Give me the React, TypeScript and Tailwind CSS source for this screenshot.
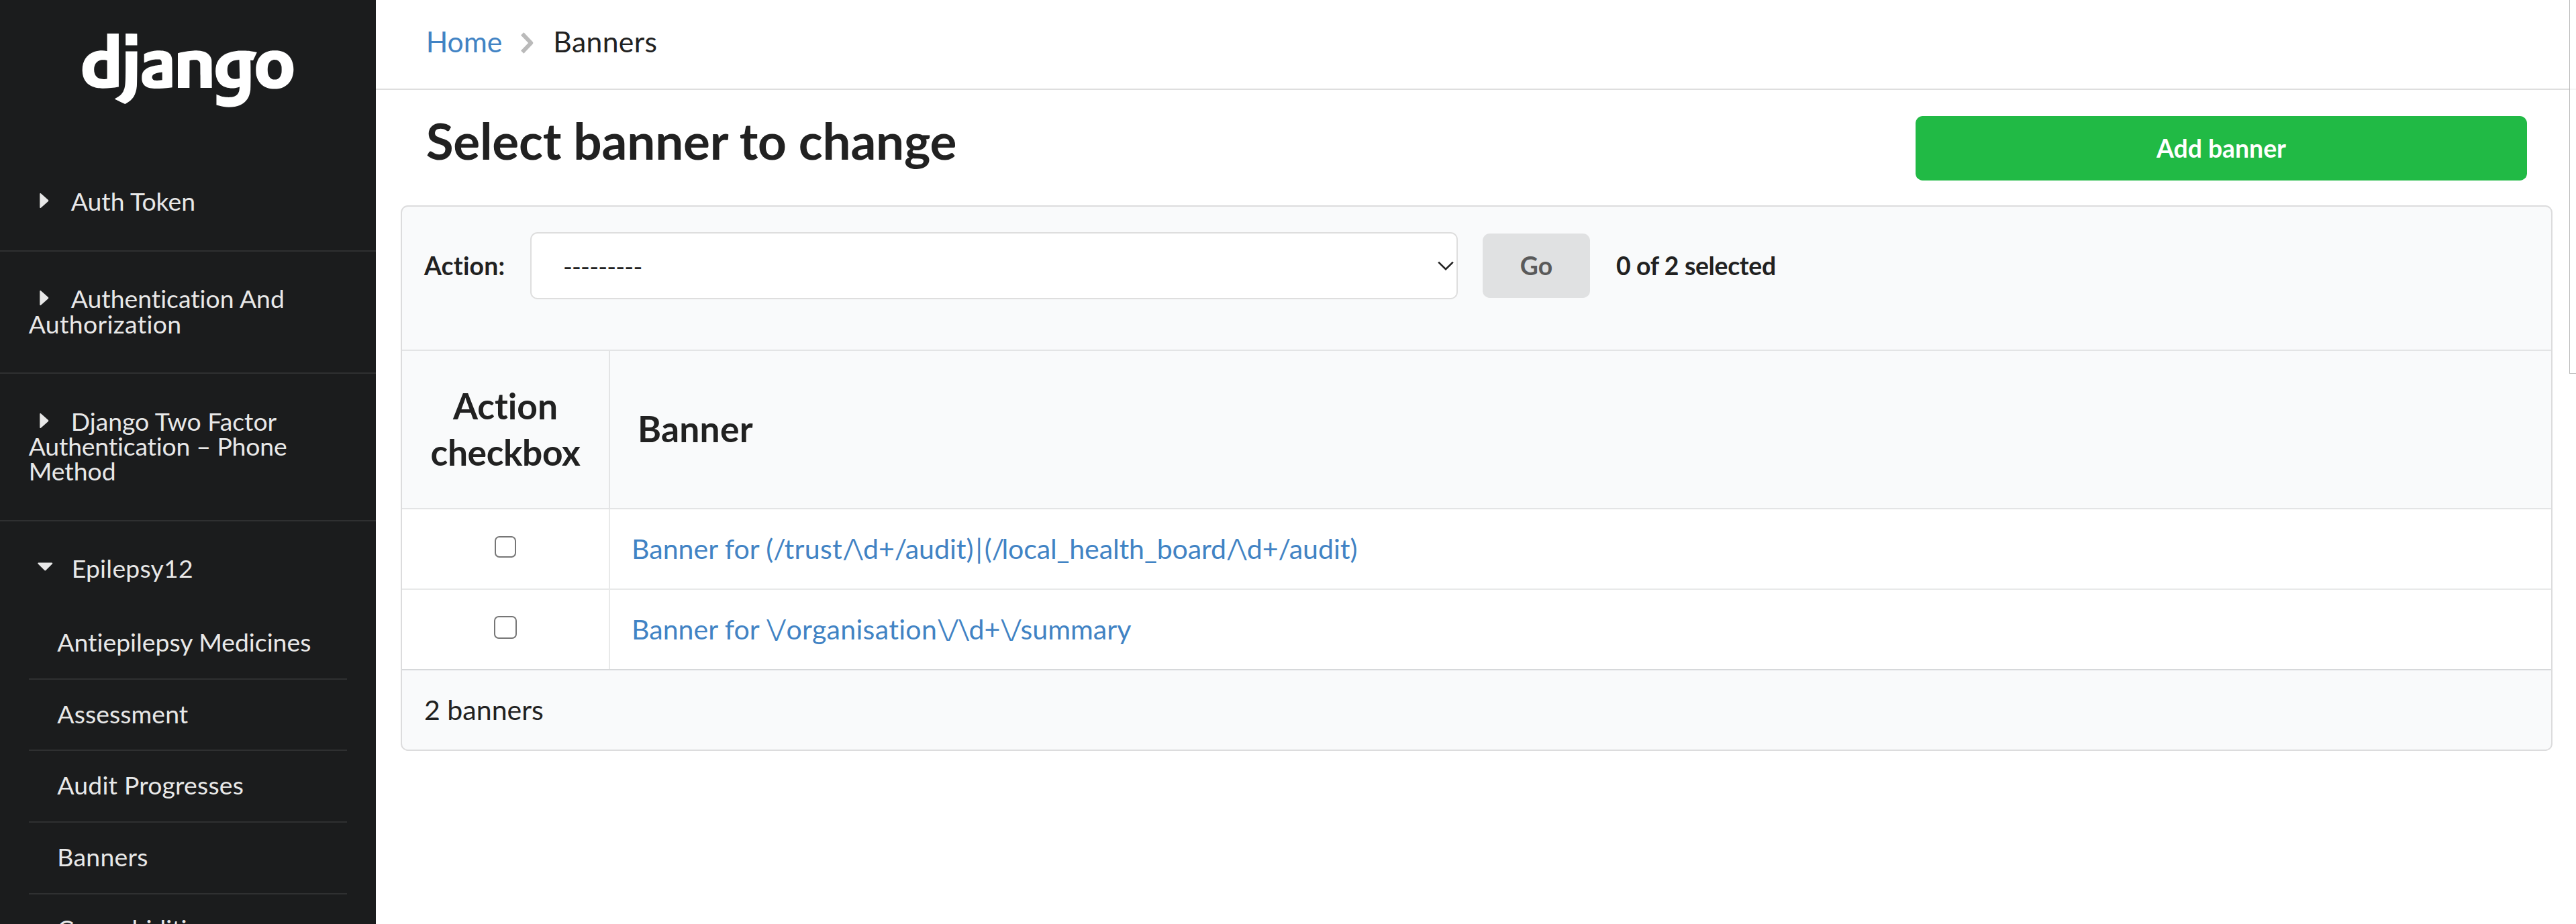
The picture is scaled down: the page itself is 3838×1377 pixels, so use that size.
import React from 'react';
import { DiDjango } from 'react-icons/di';

type Run = [text: string, tracking?: string];

const collapsedApps: Run[][] = [
  [['Auth Token']],
  [['Authentication And '], ['Authorization', 'tracking-[0.37px]']],
  [['Django Two Factor '], ['Authentication – Phone', 'tracking-[-0.17px]'], [' Method']],
];

const models: Run[] = [
  ['Antiepilepsy Medicines'],
  ['Assessment', 'tracking-[0.1px]'],
  ['Audit Progresses', 'tracking-[0.2px]'],
  ['Banners', 'tracking-[0.3px]'],
  ['Comorbidities'],
];

// Slashes and backslashes in the URL patterns are kerned tightly.
const banners: { id: number; runs: Run[]; box: string }[] = [
  {
    id: 1,
    runs: [
      ['Banner for ('],
      ['/', 'tracking-[-2.3px]'],
      ['trust', 'tracking-[0.3px]'],
      ['/', 'tracking-[-5px]'],
      ['\\', 'tracking-[-1.3px]'],
      ['d+'],
      ['/', 'tracking-[-2.7px]'],
      ['audit'],
      [')|', 'tracking-[3px]'],
      ['('],
      ['/', 'tracking-[-3.8px]'],
      ['local_health_board', 'tracking-[-0.12px]'],
      ['/', 'tracking-[-5px]'],
      ['\\', 'tracking-[-1.3px]'],
      ['d+'],
      ['/', 'tracking-[-2.4px]'],
      ['audit)'],
    ],
    box: 'mb-[6px] size-8',
  },
  {
    id: 2,
    runs: [
      ['Banner for'],
      [' ', 'tracking-[-1.5px]'],
      ['\\', 'tracking-[-5.5px]'],
      ['/', 'tracking-[-0.8px]'],
      ['organisation', 'tracking-[0.3px]'],
      ['\\', 'tracking-[-4px]'],
      ['/', 'tracking-[-2.5px]'],
      ['\\', 'tracking-[-1.7px]'],
      ['d'],
      ['+', 'tracking-[-0.5px]'],
      ['\\', 'tracking-[-4px]'],
      ['/', 'tracking-[-2.5px]'],
      ['summary'],
    ],
    box: 'mb-[6px] size-[34px]',
  },
];

function Runs({ runs }: { runs: Run[] }) {
  return (
    <>
      {runs.map(([text, tracking], i) =>
        tracking ? (
          <span key={i} className={tracking}>
            {text}
          </span>
        ) : (
          text
        ),
      )}
    </>
  );
}

function CaretRight() {
  return (
    <svg viewBox="0 0 63 22" className="inline-block h-[22px] w-[63px] align-[4px]" fill="currentColor">
      <path d="M16.3 1v20c0 .9 1 1.3 1.6.7l11-9.8c.5-.5.5-1.3 0-1.8L17.9.3c-.6-.6-1.6-.2-1.6.7z" />
    </svg>
  );
}

function CaretDown() {
  return (
    <svg viewBox="0 0 64 22" className="inline-block h-[22px] w-[64px] align-[4px]" fill="currentColor">
      <path d="M14.4 3.6h19.8c1 0 1.4 1.1.8 1.7l-9.8 9.7c-.5.5-1.3.5-1.8 0L13.6 5.3c-.6-.6-.2-1.7.8-1.7z" />
    </svg>
  );
}

function Sidebar() {
  return (
    <aside className="h-full w-[560px] shrink-0 overflow-hidden bg-[#1b1c1d] text-[37.33px] leading-[37.33px] text-[#e8e8e8]">
      <div className="flex h-[230px] items-start justify-center">
        <DiDjango className="-mt-[57px] size-[318px] shrink-0 text-white" />
      </div>
      {collapsedApps.map((runs) => (
        <div key={runs[0][0]} className="border-b-2 border-[#2f3031] px-[42.67px] pt-[51.3px] pb-[54.37px]">
          <CaretRight />
          <Runs runs={runs} />
        </div>
      ))}
      <div className="px-[42.67px] pt-[51.3px]">
        <div className="mb-[40.5px] tracking-[0.25px]">
          <CaretDown />
          Epilepsy12
        </div>
        {models.map((model) => (
          <div key={model[0]} className="border-b-2 border-[#2f3031] pt-8 pb-[35.33px] pl-[42.67px]">
            <Runs runs={[model]} />
          </div>
        ))}
      </div>
    </aside>
  );
}

function Breadcrumb() {
  return (
    <header className="flex h-[134px] items-start border-b-2 border-[#dedede] pt-[41px] pl-[74.67px] text-[42.67px] leading-[42.67px]">
      <a className="text-[#4183c4]">Home</a>
      <svg viewBox="0 0 22 32" className="mt-[7px] mr-[27px] ml-[27px] h-8 w-[22px]" fill="none" stroke="#bababa" strokeWidth="6">
        <path d="M3.2 2.4 16.2 16 3.2 29.6" strokeLinejoin="round" />
      </svg>
      <span className="tracking-[0.35px]">Banners</span>
    </header>
  );
}

function Toolbar() {
  return (
    <div className="flex h-[215px] items-start border-b-2 border-[#e3e4e5] pt-[38px] pl-[33px] text-[37.33px] leading-[37.33px] font-bold">
      <label className="mt-[31px] w-[158px] tracking-[0.2px]">Action:</label>
      <div className="flex h-[100px] w-[1382px] items-center justify-between rounded-[10.67px] border-2 border-[#dedede] bg-white pr-1 pl-[47px] font-normal">
        <span className="pt-[2px] tracking-[-0.82px]">---------</span>
        <svg viewBox="0 0 24 14" className="h-[14px] w-6" fill="none" stroke="#212121" strokeWidth="2.6">
          <path d="M1.2 1.6 12 12.2 22.8 1.6" />
        </svg>
      </div>
      <button className="mt-[2px] ml-[37px] h-24 w-40 rounded-[10.67px] bg-[#e0e1e2] text-[#5a5a5a]">Go</button>
      <span className="mt-[31px] ml-[39px] tracking-[-0.32px]">0 of 2 selected</span>
    </div>
  );
}

function BannerTable() {
  return (
    <section className="mr-[35px] ml-[37px] overflow-hidden rounded-[10.67px] border-2 border-[#dcdcdd] bg-[#f9fafb] text-[41.07px] leading-[49.3px]">
      <Toolbar />
      <div className="flex h-[236px] border-b-2 border-[#e3e4e5] text-[53.33px] leading-[68.57px] font-bold">
        <div className="flex w-[310px] flex-col items-center justify-center border-r-2 border-[#e3e4e5] pb-[3px] text-center">
          <span>Action</span>
          <span className="tracking-[-0.4px]">checkbox</span>
        </div>
        <div className="flex items-center pb-[3px] pl-[41px] tracking-[0.25px]">Banner</div>
      </div>
      {banners.map((banner) => (
        <div key={banner.id} className="flex h-[120px] border-b-2 border-[#e8e9e9] bg-white last-of-type:border-[#d6d8da]">
          <div className="flex w-[310px] items-center justify-center border-r-2 border-[#e8e9e9]">
            <span className={banner.box + ' rounded-[7px] border-2 border-[#767676] bg-white'} />
          </div>
          <div className="flex items-center pb-px pl-8">
            <a className="whitespace-pre text-[#4183c4]">
              <Runs runs={banner.runs} />
            </a>
          </div>
        </div>
      ))}
      <footer className="flex h-[118px] items-center pb-px pl-[33px]">2 banners</footer>
    </section>
  );
}

export default function App() {
  return (
    <div className="relative flex h-[1377px] w-[3838px] overflow-hidden bg-white font-['Lato',sans-serif] text-[#212121] [font-variant-ligatures:none]">
      <Sidebar />
      <main className="flex-1">
        <Breadcrumb />
        <div className="flex h-[172px] items-start justify-between pr-[73px] pl-[74.67px]">
          <h1 className="mt-[38px] text-[74.67px] leading-[74.67px] font-bold tracking-[-0.19px]">Select banner to change</h1>
          <button className="mt-[39px] h-24 w-[911px] rounded-[10.67px] bg-[#21ba45] pb-px text-[37.33px] leading-[37.33px] font-bold text-white">
            Add banner
          </button>
        </div>
        <BannerTable />
      </main>
      <div className="absolute top-0 right-0 h-[557px] w-[10px] border-b border-l border-[#bcbcbc] bg-white/70" />
    </div>
  );
}
